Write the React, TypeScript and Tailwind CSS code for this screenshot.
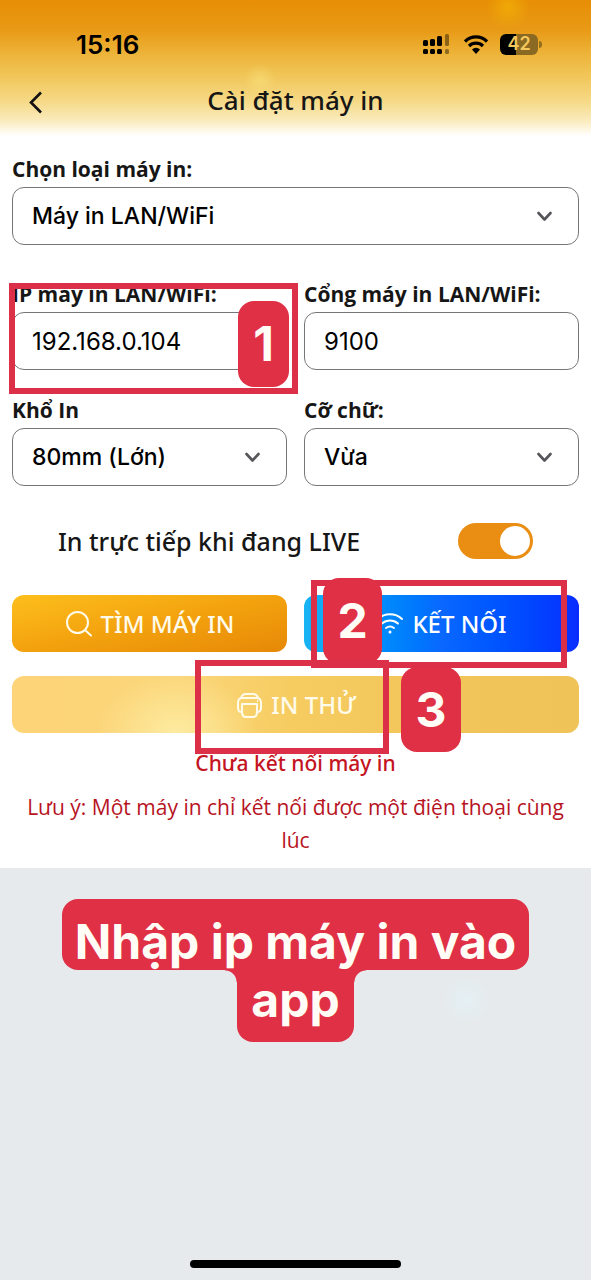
import { useId, useState } from 'react'
import type { ReactNode } from 'react'

const boxClass =
  'w-full h-[58px] rounded-xl border border-[#77757a] bg-white pl-[19px] pr-12 font-[Inter,sans-serif] text-black outline-none'
const labelClass = "block pb-0.5 font-['Open_Sans',sans-serif] text-[21px] leading-8 font-bold whitespace-nowrap"

function SelectField({ label, options }: { label: string; options: string[] }) {
  const id = useId()
  return (
    <div>
      <label htmlFor={id} className={labelClass}>{label}</label>
      <div className="relative">
        <select id={id} className={`${boxClass} appearance-none text-[23px] font-medium`}>
          {options.map((option) => (
            <option key={option}>{option}</option>
          ))}
        </select>
        <svg className="absolute right-[26px] top-6 w-4 h-3 pointer-events-none" viewBox="0 0 16 12" fill="none">
          <path d="M1.500 2l6 6.500l6-6.500" stroke="#55555a" strokeWidth="2.600" strokeLinecap="round" strokeLinejoin="round" />
        </svg>
      </div>
    </div>
  )
}

function TextField({ label, value, children }: { label: string; value: string; children?: ReactNode }) {
  const id = useId()
  return (
    <div className="relative">
      <label htmlFor={id} className={labelClass}>{label}</label>
      <input id={id} type="text" inputMode="decimal" defaultValue={value} className={`${boxClass} text-2xl`} />
      {children}
    </div>
  )
}

function Frame({ className }: { className: string }) {
  return <div className={`absolute border-6 border-[#dc3048] pointer-events-none ${className}`} />
}

function Step({ n, className }: { n: number; className: string }) {
  return (
    <div className={`absolute flex items-center justify-center rounded-2xl bg-[#e03045] font-[Inter,sans-serif] text-5xl font-bold text-[#fffdf5] pointer-events-none ${className}`}>
      {n}
    </div>
  )
}

function StatusBar() {
  return (
    <div className="flex h-12 items-center justify-between pl-[76px] pr-[49px] text-black">
      <span className="font-[Inter,sans-serif] text-[26px] font-semibold">15:16</span>
      <div className="flex items-center">
        {/* Signal */}
        <svg className="w-[30px] h-[22px]" viewBox="0 0 30 22" fill="currentColor">
          <rect x="1" y="7" width="5" height="6" rx="1.500" />
          <rect x="8" y="6" width="5" height="7" rx="1.500" />
          <rect x="15" y="3" width="5" height="10" rx="1.500" />
          <rect x="23" y="1" width="4" height="12" rx="1.500" opacity="0.4" />
          <rect x="1" y="16" width="5" height="5" rx="1.500" />
          <rect x="8" y="16" width="5" height="5" rx="1.500" />
          <rect x="15" y="16" width="5" height="5" rx="1.500" />
          <rect x="23" y="16" width="4" height="5" rx="1.500" opacity="0.4" />
        </svg>
        {/* WiFi */}
        <svg className="ml-3 w-6 h-5" viewBox="0 0 24 20" fill="none" stroke="currentColor" strokeWidth="3.200">
          <path d="M1 7.500a15.500 15.500 0 0 1 22 0" />
          <path d="M5 12a10 10 0 0 1 14 0" />
          <path d="M12 20l-4-4.500a5.500 5.500 0 0 1 8 0z" fill="currentColor" stroke="none" />
        </svg>
        {/* Battery */}
        <div className="ml-3 flex items-center">
          <div className="flex h-[21px] w-[38px] items-center justify-center rounded-md bg-linear-to-r from-black from-42% to-[#8a6a22] to-42% font-[Inter,sans-serif] text-lg font-semibold text-[#f3c75b]">
            42
          </div>
          <div className="ml-px h-[7px] w-[3px] rounded-r-full bg-[#94701e]" />
        </div>
      </div>
    </div>
  )
}

export default function App() {
  const [live, setLive] = useState(true)

  return (
    <div className="flex min-h-screen flex-col bg-[#e6eaed] font-['Noto_Sans',sans-serif] text-[#161616]">
      <div className="bg-white pb-[11px]">
        <header className="bg-[radial-gradient(circle_at_44%_59%,#f8e27a99_0,transparent_16px),radial-gradient(circle_at_86%_5%,#f5b80499_0,transparent_22px),linear-gradient(to_bottom,#e78e05_0%,#e89a16_22%,#edb43a_40%,#f1c659_56%,#f6da88_75%,#fbedc3_90%,#ffffff_100%)] pt-5">
          <StatusBar />
          <div className="grid h-[68px] grid-cols-[48px_1fr_48px] items-center px-3">
            <button type="button" aria-label="Quay lại" className="flex h-12 items-center pl-4">
              <svg className="w-4 h-6" viewBox="0 0 16 24" fill="none" stroke="#111" strokeWidth="2.600">
                <path d="M13 2.500L3 12.500l10 10" />
              </svg>
            </button>
            <h1 className="pb-1 text-center text-[26px] font-medium">Cài đặt máy in</h1>
          </div>
        </header>

        <main className="px-3 pt-[17px]">
          <SelectField label="Chọn loại máy in:" options={['Máy in LAN/WiFi', 'Máy in Bluetooth']} />

          <div className="mt-[33px] grid grid-cols-2 gap-x-[17px] gap-y-6">
            <TextField label="IP máy in LAN/WiFi:" value="192.168.0.104">
              <Frame className="-left-[3px] -right-[11px] top-[5px] -bottom-6" />
              <Step n={1} className="-right-[2px] top-[23px] h-[86px] w-[51px]" />
            </TextField>
            <TextField label="Cổng máy in LAN/WiFi:" value="9100" />
            <SelectField label="Khổ In" options={['80mm (Lớn)', '58mm (Nhỏ)']} />
            <SelectField label="Cỡ chữ:" options={['Vừa', 'Nhỏ', 'Lớn']} />
          </div>

          <div className="mt-[37px] flex items-center justify-between px-[46px]">
            <label htmlFor="live" className="text-[25px] leading-9 font-medium">In trực tiếp khi đang LIVE</label>
            <input
              id="live"
              type="checkbox"
              role="switch"
              checked={live}
              onChange={(e) => setLive(e.target.checked)}
              className="relative h-9 w-[75px] appearance-none rounded-full bg-gray-300 before:absolute before:top-[3px] before:left-[3px] before:size-[30px] before:rounded-full before:bg-white checked:bg-[#e98e13] checked:before:left-[42px]"
            />
          </div>

          {/* Actions */}
          <div className="mt-9 grid grid-cols-2 gap-x-[17px]">
            <button type="button" className="flex h-[57px] items-center justify-center gap-2 rounded-xl bg-linear-to-br from-[#fdbf1c] via-[#f3a20e] to-[#e68807] text-2xl font-medium text-[#fffbea]">
              <svg className="size-7" viewBox="0 0 28 28" fill="none" stroke="currentColor" strokeWidth="2" strokeLinecap="round">
                <circle cx="12.500" cy="12.500" r="10.500" />
                <path d="M20 20L26 25.500" />
              </svg>
              TÌM MÁY IN
            </button>
            <div className="relative">
              <button type="button" className="flex h-[57px] w-full items-center justify-center gap-2 rounded-xl bg-linear-to-r from-[#18b4f4] via-[#0a68ff] to-[#0a2cff] text-2xl font-medium text-white">
                <svg className="w-7 h-6" viewBox="0 0 28 24" fill="none" stroke="currentColor" strokeWidth="2" strokeLinecap="round">
                  <path d="M2 7a17.500 17.500 0 0 1 24 0" />
                  <path d="M6 11.500a12 12 0 0 1 16 0" />
                  <path d="M10 16a6.500 6.500 0 0 1 8 0" />
                  <circle cx="14" cy="20" r="1.500" fill="currentColor" stroke="none" />
                </svg>
                KẾT NỐI
              </button>
              <Frame className="left-[7px] right-3 -top-[15px] -bottom-4" />
              <Step n={2} className="left-[19px] -top-[17px] h-[86px] w-[59px]" />
            </div>
          </div>

          <div className="relative mt-6">
            <button type="button" className="flex h-[57px] w-full items-center justify-center gap-2 rounded-xl bg-[radial-gradient(ellipse_80px_60px_at_29%_100%,#fdeba0_0%,#fdeba000_100%),linear-gradient(to_right,#fdd477,#fbd67a_30%,#f6cc60_50%,#f2c65b_70%,#efc358)] text-2xl font-medium text-[#fffbea]">
              <svg className="size-7" viewBox="0 0 28 28" fill="none" stroke="currentColor" strokeWidth="2" strokeLinejoin="round">
                <path d="M6 7q1-4 5-4h7q4 0 5 4z" />
                <path d="M7 21q-4 0-4-4v-5q0-5 4-5h15q4 0 4 5v5q0 4-4 4" />
                <path d="M7 13h15v8q0 5-4 5h-7q-4 0-4-5z" />
                <path d="M22 10h1" />
              </svg>
              IN THỬ
            </button>
            <Frame className="left-[183px] right-[190px] -top-4 -bottom-[21px]" />
            <Step n={3} className="right-[118px] -top-[9px] h-[85px] w-[60px]" />
          </div>

          <p className="mt-[14px] text-center text-[21px] leading-8 font-medium text-[#c4141f]">Chưa kết nối máy in</p>
          <p className="mt-3 text-center font-['Open_Sans',sans-serif] text-[21px] leading-[33px] text-[#b8141f]">
            Lưu ý: Một máy in chỉ kết nối được một điện thoại cùng lúc
          </p>
        </main>
      </div>

      <footer className="flex flex-1 flex-col items-center justify-between bg-[radial-gradient(circle_at_79%_32%,#e4f0f4_0,transparent_24px)] pt-[31px] pb-3">
        <p className="flex flex-col items-center font-[Inter,sans-serif] text-5xl font-bold text-[#fffdf5]">
          <span className="flex h-[71px] items-end rounded-2xl bg-[#e03045] px-[13px] leading-[56px]">Nhập ip máy in vào</span>
          <span className="relative h-[72px] rounded-b-2xl bg-[#e03045] px-[14px] leading-[60px]">
            app
            <i className="absolute right-full top-0 size-3 bg-[radial-gradient(circle_at_0%_100%,transparent_11px,#e03045_12px)]" />
            <i className="absolute left-full top-0 size-3 bg-[radial-gradient(circle_at_100%_100%,transparent_11px,#e03045_12px)]" />
          </span>
        </p>
        <div className="h-2 w-[211px] rounded-full bg-black" />
      </footer>
    </div>
  )
}
